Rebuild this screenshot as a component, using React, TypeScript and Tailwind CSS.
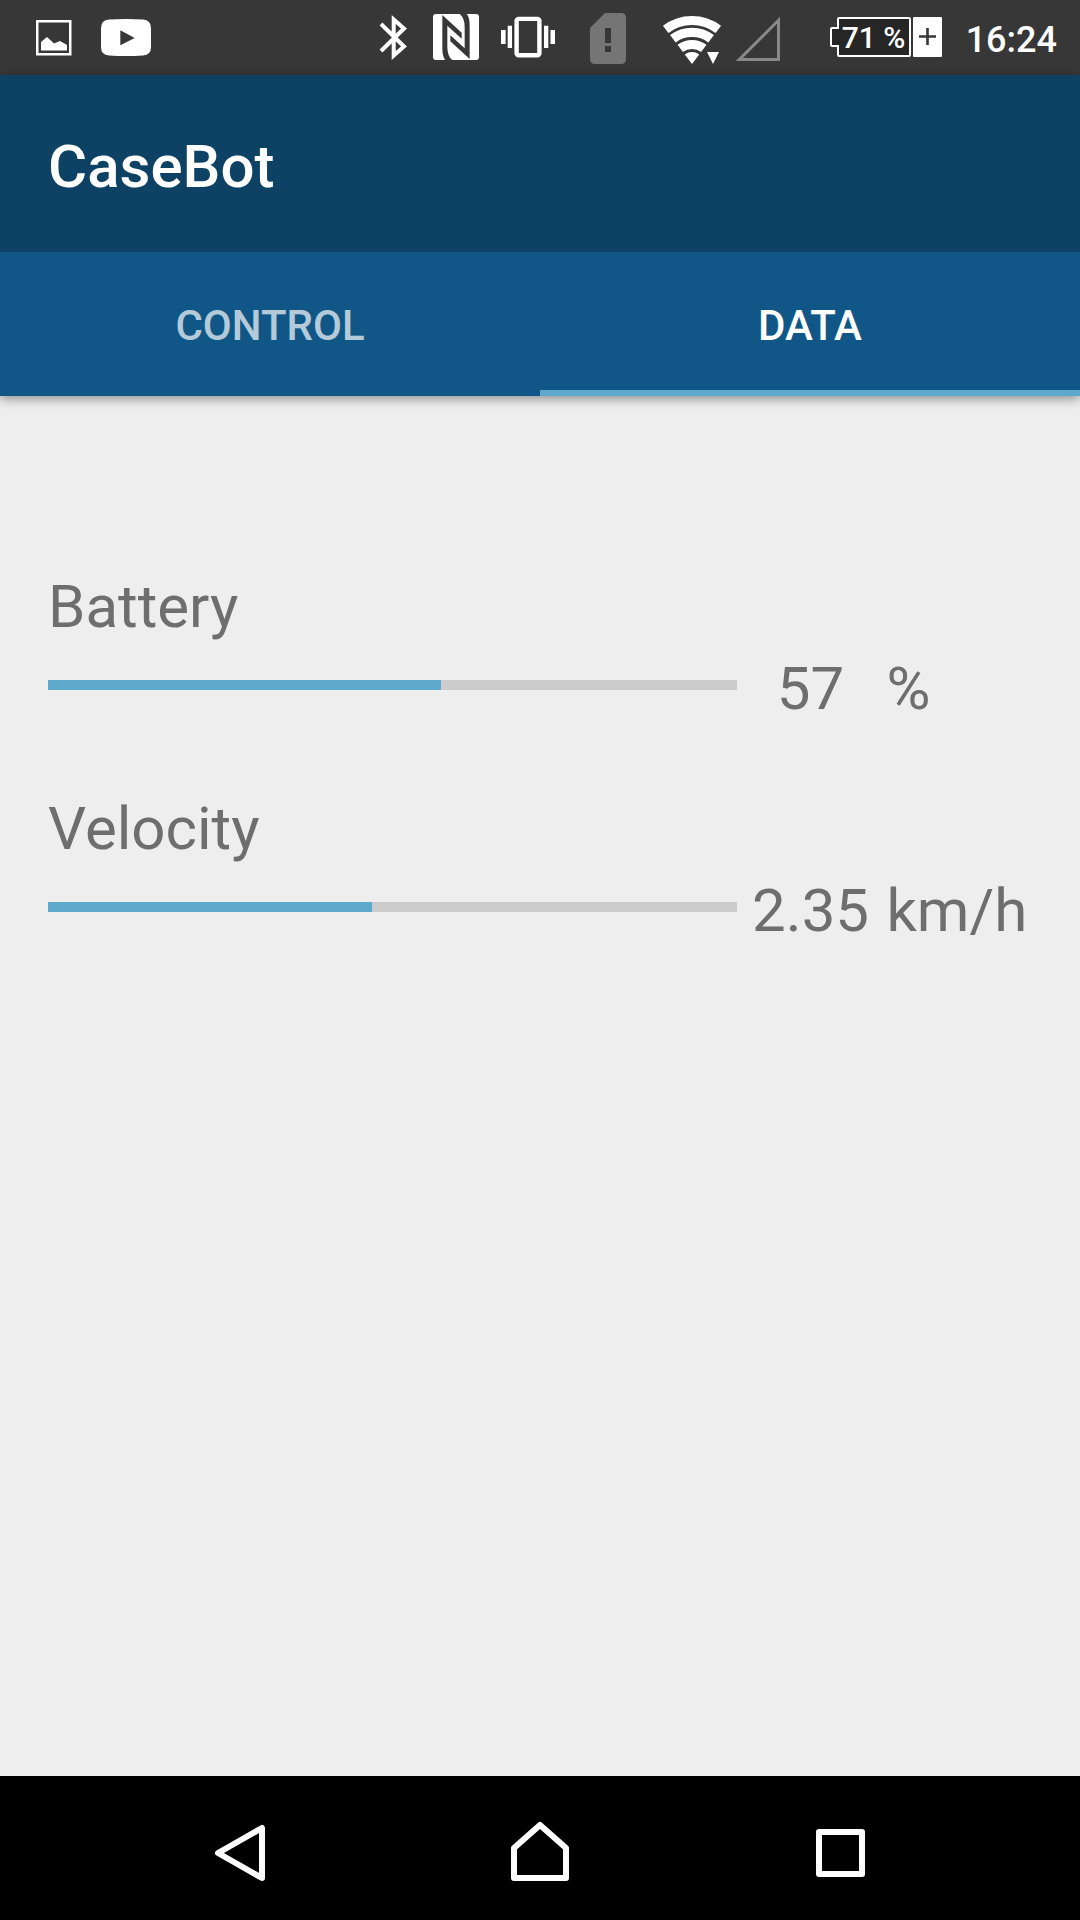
import React, { useState } from "react";

type Tab = "control" | "data";

type Reading = {
  id: string;
  label: string;
  value: string;
  unit: string;
  percent: number;
};

const readings: Reading[] = [
  { id: "battery", label: "Battery", value: "57", unit: "%", percent: 57 },
  { id: "velocity", label: "Velocity", value: "2.35", unit: "km/h", percent: 47 },
];

function NotificationIcons() {
  return (
    <svg width="160" height="75" viewBox="0 0 160 75" className="shrink-0" aria-hidden="true">
      <rect x="37.25" y="21.25" width="33" height="33" fill="none" stroke="#fff" strokeWidth="2.5" />
      <path d="M41 50.5V42L47 37L54 43.5L60 41L67 45V50.5Z" fill="#fff" />
      <path
        d="M109 19.5Q126 18.5 143 19.5Q151 20 151 28V47Q151 55 143 55.5Q126 56.5 109 55.5Q101 55 101 47V28Q101 20 109 19.5Z"
        fill="#fff"
      />
      <path d="M120.3 30.3L134.7 38L120.3 45.3Z" fill="#373737" />
    </svg>
  );
}

function BluetoothIcon() {
  return (
    <svg width="50" height="75" viewBox="0 0 50 75" className="shrink-0" aria-hidden="true">
      <path
        d="M11 24L34 46.5L23.7 55.5V19.5L34 28.5L11 51"
        fill="none"
        stroke="#fff"
        strokeWidth="4"
      />
    </svg>
  );
}

function NfcIcon() {
  return (
    <svg width="72" height="75" viewBox="0 0 72 75" className="shrink-0" aria-hidden="true">
      <rect x="13" y="14" width="46" height="46" rx="3" fill="#fff" />
      <g transform="translate(10 10) scale(0.3333)" fill="#373737">
        <path d="M37 15L95 68V86L52 47V110Q52 140 68 151H46Q37 140 37 115Z" />
        <path d="M119 147L61 94V76L104 115V52Q104 22 88 11H110Q119 22 119 47Z" />
      </g>
    </svg>
  );
}

function VibrateIcon() {
  return (
    <svg width="72" height="75" viewBox="0 0 72 75" className="shrink-0" aria-hidden="true">
      <rect x="24.6" y="18.9" width="22.8" height="36.4" rx="2" fill="none" stroke="#fff" strokeWidth="4.4" />
      <path d="M9 30h4.6v14H9zM15.7 25.7H20V48h-4.3zM52 25.7h4.3V48H52zM58.5 30H63v14h-4.5z" fill="#fff" />
    </svg>
  );
}

function SimAlertIcon() {
  return (
    <svg width="88" height="75" viewBox="0 0 88 75" className="shrink-0" aria-hidden="true">
      <path
        d="M41 13H57Q62 13 62 18V59Q62 64 57 64H31Q26 64 26 59V28Z"
        fill="#757575"
      />
      <path d="M41 28h6v15h-6zM41 46h6v6h-6z" fill="#373737" />
    </svg>
  );
}

function WifiIcon() {
  return (
    <svg width="76" height="75" viewBox="0 0 76 75" className="shrink-0" aria-hidden="true">
      <g transform="translate(8 10) scale(0.3333)" fill="none" stroke="#fff">
        <path d="M17 58A130.5 130.5 0 0 1 175 58" strokeWidth="27" />
        <path d="M38.6 86.3A95 95 0 0 1 153.4 86.3" strokeWidth="28" />
        <path d="M60.7 115.4A58.5 58.5 0 0 1 131.3 115.4" strokeWidth="27" />
        <path d="M74.3 133.3A36 36 0 0 1 117.7 133.3L96 162Z" fill="#fff" stroke="none" />
        <path d="M141 126H177L159 162Z" fill="#fff" stroke="none" />
      </g>
    </svg>
  );
}

function SignalIcon() {
  return (
    <svg width="72" height="75" viewBox="0 0 72 75" className="shrink-0" aria-hidden="true">
      <path d="M11.3 59.5H50.5V20.3Z" fill="none" stroke="#888" strokeWidth="3" />
    </svg>
  );
}

function BatteryIndicator() {
  return (
    <div className="relative ml-[30px] mr-6 flex h-[75px] w-28 shrink-0 items-center pl-3">
      <svg width="112" height="75" viewBox="0 0 112 75" className="absolute left-0 top-0" aria-hidden="true">
        <path
          d="M9 18H79Q80 18 80 19V55Q80 56 79 56H9Q8 56 8 55V46H2Q1 46 1 45V29Q1 28 2 28H8V19Q8 18 9 18Z"
          fill="#262626"
          stroke="#fff"
          strokeWidth="2"
        />
        <rect x="83" y="17" width="29" height="40" rx="1" fill="#fff" />
        <path d="M89 36.5H106M97.5 28V45" stroke="#373737" strokeWidth="2.6" />
      </svg>
      <span className="relative whitespace-nowrap text-[30px] font-medium leading-9">71 %</span>
    </div>
  );
}

function StatusBar() {
  return (
    <div className="flex h-[75px] items-center justify-between bg-[#373737] pr-[23px] text-white">
      <NotificationIcons />
      <div className="flex items-center">
        <BluetoothIcon />
        <NfcIcon />
        <VibrateIcon />
        <SimAlertIcon />
        <WifiIcon />
        <SignalIcon />
        <BatteryIndicator />
        <time className="pt-1 text-[36px] font-medium leading-10">16:24</time>
      </div>
    </div>
  );
}

function TabButton({
  label,
  active,
  onSelect,
}: {
  label: string;
  active: boolean;
  onSelect: () => void;
}) {
  return (
    <button
      type="button"
      role="tab"
      aria-selected={active}
      onClick={onSelect}
      className={
        active
          ? "h-full flex-1 border-b-6 border-[#5ea8cc] pt-2.5 text-[42px] font-medium leading-[50px] text-white"
          : "h-full flex-1 border-b-6 border-transparent pt-2.5 text-[42px] font-medium leading-[50px] text-white/70"
      }
    >
      {label}
    </button>
  );
}

function ReadingRow({ reading }: { reading: Reading }) {
  return (
    <section>
      <h2 id={reading.id} className="leading-[70px]">
        {reading.label}
      </h2>
      <div className="mt-3 grid grid-cols-[70fr_15fr_15fr] items-start leading-[70px]">
        <div
          role="progressbar"
          aria-labelledby={reading.id}
          aria-valuenow={reading.percent}
          aria-valuemin={0}
          aria-valuemax={100}
          className="mt-[26px] h-2.5 bg-[#cccccc]"
        >
          <div className="h-full bg-[#5ea8cc]" style={{ width: `${reading.percent}%` }} />
        </div>
        <span className="text-center">{reading.value}</span>
        <span className="pl-0.5">{reading.unit}</span>
      </div>
    </section>
  );
}

function NavigationBar() {
  return (
    <nav className="flex h-36 items-center bg-black px-[90px]">
      <button type="button" aria-label="Back" className="flex flex-1 justify-center">
        <svg width="72" height="72" viewBox="0 0 72 72" fill="none" stroke="#fff" strokeWidth="6" strokeLinejoin="round">
          <path d="M14 41L58 16V66Z" />
        </svg>
      </button>
      <button type="button" aria-label="Home" className="flex flex-1 justify-center">
        <svg width="72" height="72" viewBox="0 0 72 72" fill="none" stroke="#fff" strokeWidth="6" strokeLinejoin="round">
          <path d="M10 66V36L36 13L62 36V66Z" />
        </svg>
      </button>
      <button type="button" aria-label="Recent apps" className="flex flex-1 justify-center">
        <svg width="72" height="72" viewBox="0 0 72 72" fill="none" stroke="#fff" strokeWidth="6" strokeLinejoin="round">
          <rect x="15" y="20" width="43" height="42" />
        </svg>
      </button>
    </nav>
  );
}

export default function App() {
  const [tab, setTab] = useState<Tab>("data");

  return (
    <div className="flex min-h-screen flex-col bg-[#eeeeee] font-[Roboto,sans-serif]">
      <StatusBar />
      <header className="relative shadow-[0_3px_10px_rgba(0,0,0,0.4)]">
        <div className="flex h-[177px] items-center bg-[#0d4265] px-12 pt-1.5">
          <h1 className="text-[60px] font-medium leading-[70px] text-white">CaseBot</h1>
        </div>
        <div role="tablist" className="flex h-36 bg-[#105787]">
          <TabButton label="CONTROL" active={tab === "control"} onSelect={() => setTab("control")} />
          <TabButton label="DATA" active={tab === "data"} onSelect={() => setTab("data")} />
        </div>
      </header>
      <main className="flex flex-1 flex-col gap-[70px] px-12 pt-44 text-[60px] text-[#6e6e6e]">
        {tab === "data" && readings.map((reading) => <ReadingRow key={reading.id} reading={reading} />)}
      </main>
      <NavigationBar />
    </div>
  );
}
